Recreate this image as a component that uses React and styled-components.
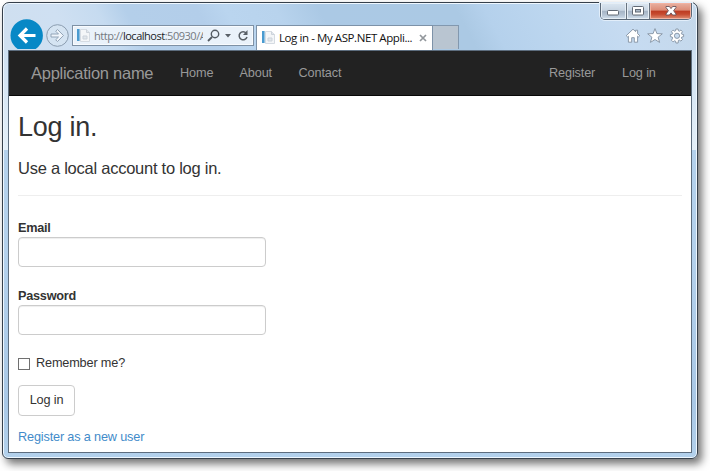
import React from "react";
import styled, { createGlobalStyle } from "styled-components";

const Global = createGlobalStyle`
  * { box-sizing: border-box; }
  body { margin: 0; background: #fff; overflow: hidden; font-family: "Liberation Sans", Arial, sans-serif; }
`;

const Stage = styled.div`
  width: 710px;
  height: 471px;
  padding: 2px;
  background: #fff;
`;

const BrowserWindow = styled.div`
  width: 696px;
  height: 457px;
  border: 1px solid #36404b;
  border-radius: 7px 7px 6px 6px;
  padding: 0 5px 5px;
  display: flex;
  flex-direction: column;
  background:
    linear-gradient(62deg, #cfdfef 0, #cfe0f2 10%, #c6dbf0 16%, #b4cfea 20%, #b3ceea 30%, #bad5ef 34%, #b8d3ed 41%, #abc9e5 47%, #abc9e4 66%, #b5d1ec 70%, #bcd6ef 78%, #c6dbf1 88%, #c5d8ea 100%) 0 0 / 100% 47px no-repeat,
    linear-gradient(180deg, #cfe1f2 47px, #e4eff8 147px, #b4d1ec 147px 250px, #a9c8e6 400px, #b3d1ec 100%);
  box-shadow: inset 0 0 0 1px #eef7ff, 4px 5px 8px 0 rgba(0, 0, 0, .55);
`;

const CaptionBar = styled.div`
  flex: 0 0 17px;
  display: flex;
  justify-content: flex-end;
`;

const CaptionGroup = styled.div`
  display: flex;
  width: 92px;
  height: 17px;
  border: 1px solid #5b6978;
  border-top: 0;
  border-radius: 0 0 5px 5px;
  overflow: hidden;
  box-shadow: 0 0 0 1px #e2eefa;
`;

const CaptionButton = styled.div`
  width: ${p => p.$w}px;
  display: flex;
  align-items: center;
  justify-content: center;
  border-left: ${p => (p.$first ? 0 : 1)}px solid #68737f;
  box-shadow: inset 0 0 0 1px ${p => (p.$close ? "#f2b3a2" : "#e6eef5")};
  background: ${p => p.$close
    ? "linear-gradient(#e8b2a2 0, #dc8b76 45%, #bd3b22 50%, #c64a2f 70%, #df9075 100%)"
    : "linear-gradient(#dce7f2 0, #c8d5e2 46%, #a5b4c5 50%, #b5c4d4 75%, #d2e0ed 100%)"};
`;

const Toolbar = styled.div`
  flex: 0 0 30px;
  display: flex;
  align-items: flex-start;
  padding-left: 1px;
  font-family: "Open Sans", "Noto Sans", sans-serif;
`;

const Glyph = styled.svg`
  display: block;
  flex: none;
  margin: ${p => p.$m || "0"};
`;

const AddressBox = styled.div`
  width: 182px;
  height: 21px;
  margin: 5px 0 0 2px;
  border: 1px solid #7e91a5;
  background: #eaf2fa;
  box-shadow: inset 0 0 0 1px #f8fbfe;
  display: flex;
  align-items: center;
  padding-left: 3px;
`;

const Url = styled.div`
  width: 109px;
  margin: 0 0 0 3px;
  overflow: hidden;
  white-space: nowrap;
  font-size: 11px;
  line-height: 19px;
  letter-spacing: -0.48px;
  color: #74797f;
  b { font-weight: 400; color: #202326; }
`;

const ActiveTab = styled.div`
  width: 177px;
  height: 25px;
  margin: 5px 0 0 2px;
  border: 1px solid #7d92a8;
  border-bottom: 0;
  background: #fff;
  display: flex;
  align-items: center;
  padding: 0 5px 1px 4px;
`;

const TabTitle = styled.div`
  width: 138px;
  margin-left: 3px;
  font-size: 11.5px;
  line-height: 20px;
  letter-spacing: -0.42px;
  color: #111;
  white-space: nowrap;
`;

const NewTab = styled.div`
  width: 26px;
  height: 24px;
  margin-top: 5px;
  border: 1px solid #8298af;
  border-left: 0;
  border-bottom: 0;
  background: #b9c5d1;
`;

const ToolIcons = styled.div`
  display: flex;
  gap: 6px;
  margin: 8px 7px 0 auto;
`;

const Viewport = styled.div`
  flex: 1;
  min-height: 0;
  border: 1px solid #5d6d7e;
  background: #fff;
`;

const Navbar = styled.nav`
  height: 45px;
  background: #222;
  border-bottom: 1px solid #080808;
  display: flex;
  align-items: center;
  padding: 0 36px 0 22px;
  color: #999;
`;

const Brand = styled.div`
  width: 149px;
  font-size: 16.5px;
  letter-spacing: -0.27px;
  white-space: nowrap;
`;

const NavLink = styled.div`
  font-size: 12.7px;
  letter-spacing: -0.13px;
  white-space: nowrap;
  width: ${p => p.$w}px;
  margin-left: ${p => (p.$push ? "auto" : "0")};
`;

const Page = styled.main`
  padding: 0 9px;
  color: #333;
  font-size: 12.7px;
  letter-spacing: -0.16px;
  line-height: 18px;
`;

const Title = styled.h2`
  margin: 15px 0 0;
  font-size: 27px;
  letter-spacing: -0.25px;
  line-height: 32px;
  font-weight: 400;
`;

const Subtitle = styled.h4`
  margin: 15px 0 0;
  padding-bottom: 17px;
  border-bottom: 1px solid #eee;
  font-size: 16.5px;
  letter-spacing: -0.25px;
  line-height: 20px;
  font-weight: 400;
`;

const Field = styled.label`
  display: block;
  margin-top: ${p => p.$top}px;
  font-weight: 700;
  letter-spacing: -0.25px;
`;

const Input = styled.input`
  display: block;
  width: 248px;
  height: 30px;
  margin-top: 0;
  border: 1px solid #ccc;
  border-radius: 4px;
  background: #fff;
  box-shadow: inset 0 1px 1px rgba(0, 0, 0, .07);
`;

const Remember = styled.label`
  display: flex;
  align-items: center;
  gap: 6px;
  margin-top: 19px;
`;

const Checkbox = styled.input`
  appearance: none;
  width: 12px;
  height: 12px;
  margin: 2px 0 0;
  border: 1px solid #707070;
  background: #fff;
`;

const Button = styled.button`
  display: block;
  width: 57px;
  height: 31px;
  margin: 13px 0 0;
  padding: 0 0 2px;
  border: 1px solid #ccc;
  border-radius: 4px;
  background: #fff;
  color: #333;
  font: 12.7px "Liberation Sans", Arial, sans-serif;
  letter-spacing: -0.16px;
`;

const RegisterLink = styled.a`
  display: block;
  margin-top: 12px;
  color: #428bca;
`;

const PageIcon = () => (
  <Glyph width="15" height="15" viewBox="0 0 15 15">
    <path d="M4.5 1.5h6l3 3v9h-9z" fill="#f4f6f8" stroke="#d5dbe2" />
    <path d="M10.5 1.5v3h3M7 8h4v3H7z" fill="#e2e7ec" stroke="#ccd3db" />
    <path d="M1 1h2.6v12H1z" fill="#4a9bd0" />
  </Glyph>
);

export default function App() {
  return (
    <>
      <Global />
      <Stage>
        <BrowserWindow>
          <CaptionBar>
            <CaptionGroup>
              <CaptionButton $w={25} $first>
                <Glyph width="12" height="6" $m="4px 0 0"><rect x=".5" y=".5" width="11" height="4.5" rx="1" fill="#fff" stroke="#626a75" /></Glyph>
              </CaptionButton>
              <CaptionButton $w={24}>
                <Glyph width="12" height="10"><rect x=".5" y=".5" width="11" height="8.5" rx="1" fill="#fff" stroke="#626a75" /><rect x="3.5" y="3.5" width="5" height="2.5" fill="#aab8c6" stroke="#626a75" /></Glyph>
              </CaptionButton>
              <CaptionButton $w={42} $close>
                <Glyph width="12" height="10" viewBox="0 0 12 10">
                  <path d="M1 .5h3.4L6 2.6 7.6.5H11v1L8.6 4.7 11 8v1H7.6L6 6.9 4.4 9H1V8l2.4-3.3L1 1.5z" fill="#fff" stroke="#68545a" strokeWidth=".9" />
                </Glyph>
              </CaptionButton>
            </CaptionGroup>
          </CaptionBar>
          <Toolbar>
            <Glyph width="34" height="30" viewBox="0 0 34 30" $m="-1px 0 0 1px">
              <circle cx="16.7" cy="16.5" r="16.2" fill="#0788c6" />
              <path d="M25.5 16.5H10.5M17 9.5l-7 7 7 7" fill="none" stroke="#fff" strokeWidth="3.2" />
            </Glyph>
            <Glyph width="25" height="25" viewBox="0 0 25 25" $m="3px 0 0 1px">
              <circle cx="12.5" cy="12.5" r="10.8" fill="#d5e4f2" stroke="#8b9db0" />
              <path d="M6 11h7.5L10.7 8.2l1.8-1.7 6 6-6 6-1.8-1.7 2.8-2.8H6z" fill="#eff5fb" stroke="#8b9db0" strokeWidth=".9" />
            </Glyph>
            <AddressBox>
              <PageIcon />
              <Url>http://<b>localhost</b>:50930/A</Url>
              <Glyph width="14" height="13" viewBox="0 0 14 13" $m="0 0 0 4px">
                <circle cx="8" cy="5" r="3.7" fill="none" stroke="#545b62" strokeWidth="1.4" />
                <path d="M5 8l-4 4" stroke="#545b62" strokeWidth="1.8" />
              </Glyph>
              <Glyph width="6" height="4" $m="1px 0 0 4px"><path d="M0 0h6L3 3.5z" fill="#5a6168" /></Glyph>
              <Glyph width="12" height="12" viewBox="0 0 12 12" $m="0 0 0 6px">
                <path d="M9.2 3.2A4 4 0 1 0 10 7" fill="none" stroke="#596067" strokeWidth="1.5" />
                <path d="M10.5 0v5H6z" fill="#596067" />
              </Glyph>
            </AddressBox>
            <ActiveTab>
              <PageIcon />
              <TabTitle>Log in - My ASP.NET Appli...</TabTitle>
              <Glyph width="8" height="8" viewBox="0 0 8 8" $m="0 0 0 2px"><path d="M1 1l6 6M7 1L1 7" stroke="#92979c" strokeWidth="1.7" /></Glyph>
            </ActiveTab>
            <NewTab />
            <ToolIcons>
              <Glyph width="16" height="16" viewBox="0 0 16 16">
                <path d="M8 1.2L1.2 7.7l1.3 1.2.9-.7v6h3.3V9.7h2.6v4.5h3.3v-6l.9.7 1.3-1.2-2.2-2V2.2h-2v1.4z" fill="#fff" stroke="#8291a2" strokeWidth=".9" strokeLinejoin="round" />
              </Glyph>
              <Glyph width="16" height="16" viewBox="0 0 16 16">
                <path d="M8 .6l1.9 5 5.4.2-4.2 3.4 1.5 5.2L8 11.5l-4.6 2.9 1.5-5.2L.7 5.8l5.4-.2z" fill="#fff" stroke="#8291a2" strokeWidth=".9" strokeLinejoin="round" />
              </Glyph>
              <Glyph width="16" height="16" viewBox="0 0 16 16">
                <path d="M6.9 1h2.2l.3 1.8 1 .4 1.5-1.1 1.6 1.6-1.1 1.5.4 1 1.8.3v2.2l-1.8.3-.4 1 1.1 1.5-1.6 1.6-1.5-1.1-1 .4L9.1 15H6.9l-.3-1.8-1-.4-1.5 1.1-1.6-1.6L3.6 10l-.4-1-1.8-.3V6.5l1.8-.3.4-1-1.1-1.5 1.6-1.6 1.5 1.1 1-.4z" fill="#fff" stroke="#8291a2" strokeWidth=".9" />
                <circle cx="8" cy="7.8" r="2.6" fill="#c9dcef" stroke="#8291a2" strokeWidth=".9" />
              </Glyph>
            </ToolIcons>
          </Toolbar>
          <Viewport>
            <Navbar>
              <Brand>Application name</Brand>
              <NavLink $w={59.5}>Home</NavLink>
              <NavLink $w={59}>About</NavLink>
              <NavLink $w={50}>Contact</NavLink>
              <NavLink $w={73} $push>Register</NavLink>
              <NavLink $w={33}>Log in</NavLink>
            </Navbar>
            <Page>
              <Title>Log in.</Title>
              <Subtitle>Use a local account to log in.</Subtitle>
              <Field $top={23}>Email<Input type="text" /></Field>
              <Field $top={20}>Password<Input type="password" /></Field>
              <Remember><Checkbox type="checkbox" />Remember me?</Remember>
              <Button>Log in</Button>
              <RegisterLink>Register as a new user</RegisterLink>
            </Page>
          </Viewport>
        </BrowserWindow>
      </Stage>
    </>
  );
}
